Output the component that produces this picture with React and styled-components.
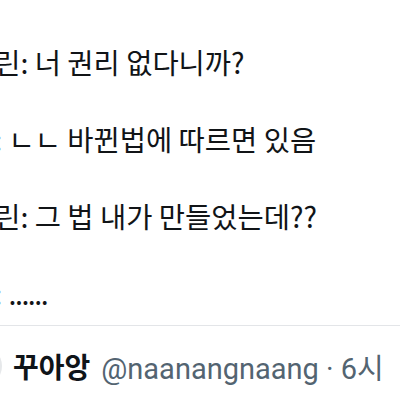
import React from "react";
import styled, { createGlobalStyle } from "styled-components";

const GlobalStyle = createGlobalStyle`
  html, body {
    margin: 0;
    padding: 0;
    background: #ffffff;
    overflow: hidden;
  }
`;

export const Page = styled.div`
  width: 400px;
  height: 400px;
  overflow: hidden;
  background: #ffffff;
  font-family: "Noto Sans CJK KR", "Noto Sans", sans-serif;
  color: #111417;
`;

export const Body = styled.div`
  padding-top: 43px;
  margin-left: -32px;
  height: 325px;
  box-sizing: border-box;
`;

export const Line = styled.div`
  font-size: 28.5px;
  line-height: 38.5px;
  white-space: pre;

  & + & {
    margin-top: 38.5px;
  }
`;

export const Dots = styled.span`
  letter-spacing: -1.5px;
`;

export const Divider = styled.div`
  height: 1px;
  background: #e3e5e8;
`;

export const Header = styled.div`
  display: flex;
  align-items: center;
  gap: 11px;
  padding-top: 19px;
  white-space: nowrap;
`;

export const Avatar = styled.div`
  width: 40px;
  height: 40px;
  border-radius: 50%;
  background: #e6e8ea;
  margin-left: -38px;
  flex-shrink: 0;
`;

export const Name = styled.span`
  font-size: 28px;
  font-weight: 700;
  color: #0f1419;
`;

export const Handle = styled.span`
  font-family: Roboto, "Noto Sans CJK KR", sans-serif;
  font-size: 29px;
  color: #536471;
`;

export default function App() {
  return (
    <Page>
      <GlobalStyle />
      <Body>
        <Line>나린: 너 권리 없다니까?</Line>
        <Line>나: ㄴㄴ 바뀐법에 따르면 있음</Line>
        <Line>나린: 그 법 내가 만들었는데??</Line>
        <Line>
          나: <Dots>......</Dots>
        </Line>
      </Body>
      <Divider />
      <Header>
        <Avatar />
        <Name>꾸아앙</Name>
        <Handle>@naanangnaang · 6시</Handle>
      </Header>
    </Page>
  );
}
